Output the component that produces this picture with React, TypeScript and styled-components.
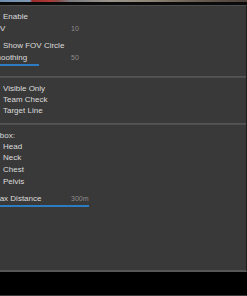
import React from "react";
import styled, { createGlobalStyle } from "styled-components";

const GlobalStyle = createGlobalStyle`
  html, body {
    margin: 0;
    padding: 0;
    background: #000;
    overflow: hidden;
  }
`;

const Screen = styled.div`
  width: 247px;
  height: 296px;
  display: flex;
  flex-direction: column;
  background: #000;
  font-family: "Liberation Sans", Arial, sans-serif;
  overflow: hidden;
`;

const GameStrip = styled.div`
  height: 2px;
  background: linear-gradient(
    to right,
    #6f8eae 0px,
    #7d98b4 30px,
    #9c2b2b 32px,
    #b03a36 50px,
    #8a4a44 57px,
    #7c7c80 70px,
    #9a948a 110px,
    #8e8676 150px,
    #6e6256 190px,
    #4c4038 247px
  );
`;

const Gap = styled.div`
  height: 2.5px;
  background: #0b0b0b;
`;

const Panel = styled.div`
  height: 264px;
  background: #393939;
  border-top: 1px solid #4e4e4e;
  border-bottom: 2px solid #565656;
  border-right: 1px solid #1f1f1f;
  overflow: hidden;
  display: flex;
  flex-direction: column;
`;

// panel content runs past the left edge of the window
const Content = styled.div`
  margin-left: -11px;
  display: flex;
  flex-direction: column;
`;

const Section = styled.div<{ $top: number; $bottom: number }>`
  display: flex;
  flex-direction: column;
  padding-top: ${(p) => p.$top}px;
  padding-bottom: ${(p) => p.$bottom}px;
`;

const Separator = styled.div`
  height: 2px;
  margin-left: 11px;
  background: #4d4d4d;
  border-top: 1px solid #555;
  box-sizing: border-box;
`;

const Spacer = styled.div<{ $h: number }>`
  height: ${(p) => p.$h}px;
`;

const CheckRow = styled.div<{ $h: number }>`
  display: flex;
  align-items: center;
  gap: 6px;
  height: ${(p) => p.$h}px;
`;

const Box = styled.span`
  width: 8px;
  height: 8px;
  box-sizing: border-box;
  border: 1px solid #777;
  background: #2a2a2a;
`;

const Label = styled.span<{ $indent?: number }>`
  font-size: 8px;
  color: #dcdcdc;
  white-space: nowrap;
  padding-left: ${(p) => p.$indent || 0}px;
`;

const GroupTitle = styled.div`
  height: 9px;
  line-height: 9px;
  padding-left: 1px;
  font-size: 8px;
  color: #dcdcdc;
`;

const SliderBlock = styled.div<{ $after: number }>`
  display: flex;
  flex-direction: column;
  margin-bottom: ${(p) => p.$after}px;
`;

const SliderHead = styled.div`
  display: grid;
  grid-template-columns: 82px auto;
  align-items: center;
  height: 12px;
`;

const Value = styled.span`
  font-size: 7px;
  color: #8c8c8c;
`;

const Track = styled.div`
  width: 100px;
  height: 2px;
`;

const Fill = styled.div`
  height: 100%;
  background: #2d7cc1;
`;

const BottomEdge = styled.div`
  margin-top: auto;
  height: 1px;
  background: #3a3a3a;
`;

const Check = ({ label, h = 12 }: { label: string; h?: number }) => (
  <CheckRow $h={h}>
    <Box />
    <Label>{label}</Label>
  </CheckRow>
);

const Slider = ({
  label,
  value,
  pct,
  after = 0,
  indent,
}: {
  label: string;
  value: string;
  pct: number;
  after?: number;
  indent?: number;
}) => (
  <SliderBlock $after={after}>
    <SliderHead>
      <Label $indent={indent}>{label}</Label>
      <Value>{value}</Value>
    </SliderHead>
    <Track>
      <Fill style={{ width: `${pct}%` }} />
    </Track>
  </SliderBlock>
);

export default function App() {
  return (
    <>
      <GlobalStyle />
      <Screen>
        <GameStrip />
        <Gap />
        <Panel>
          <Content>
            <Section $top={5} $bottom={10}>
              <Check label="Enable" />
              <Slider label="FOV" value="10" pct={10} after={3} />
              <Check label="Show FOV Circle" />
              <Slider label="Smoothing" value="50" pct={50} />
            </Section>
            <Separator />
            <Section $top={5} $bottom={7}>
              <Check label="Visible Only" h={11.3} />
              <Check label="Team Check" h={11.3} />
              <Check label="Target Line" h={11.3} />
            </Section>
            <Separator />
            <Section $top={6} $bottom={0}>
              <GroupTitle>Hitbox:</GroupTitle>
              <Check label="Head" h={11.67} />
              <Check label="Neck" h={11.67} />
              <Check label="Chest" h={11.67} />
              <Check label="Pelvis" h={11.67} />
              <Spacer $h={5.6} />
              <Slider label="Max Distance" value="300m" pct={100} indent={4} />
            </Section>
          </Content>
        </Panel>
        <BottomEdge />
      </Screen>
    </>
  );
}
